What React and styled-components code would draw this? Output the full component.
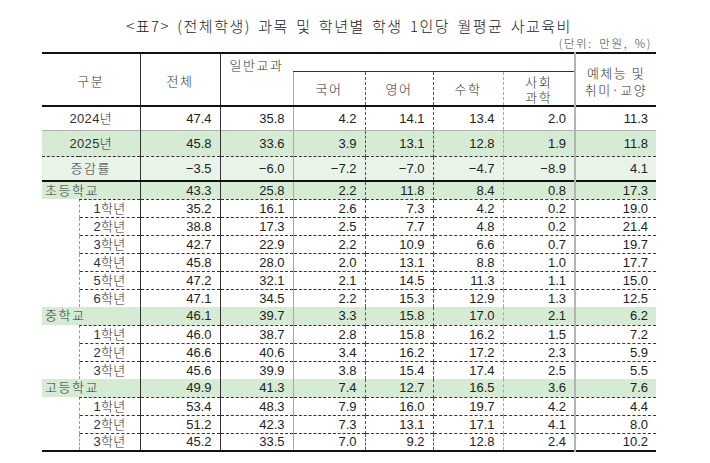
import React from "react";
import styled, { createGlobalStyle, css } from "styled-components";

const Global = createGlobalStyle`
  html, body { margin: 0; padding: 0; background: #ffffff; }
  body { font-family: "Liberation Sans", "Noto Sans CJK KR", sans-serif; color: #222; }
`;

const Page = styled.div`
  width: 710px;
  height: 463px;
  box-sizing: border-box;
  padding: 16px 0 0 42px;
`;

const Frame = styled.div`
  width: 614px;
  display: flex;
  flex-direction: column;
`;

const Title = styled.div`
  text-align: center;
  font-family: "Noto Sans CJK KR", sans-serif;
  font-weight: 300;
  font-size: 15px;
  line-height: 20px;
  letter-spacing: 1.5px;
  word-spacing: 2.5px;
  color: #1a1a1a;
`;

const Unit = styled.div`
  text-align: right;
  padding-right: 4px;
  margin-top: -1px;
  font-family: "Noto Sans CJK KR", sans-serif;
  font-weight: 300;
  font-size: 11.5px;
  line-height: 17px;
  letter-spacing: 1.6px;
  word-spacing: 2.5px;
  color: #444;
`;

const Table = styled.table`
  width: 614px;
  table-layout: fixed;
  border-collapse: collapse;
  border-top: 2px solid #111;
  border-bottom: 2px solid #111;
  font-size: 13px;
  color: #222;
`;

const leftBorder = {
  2: "1px solid #333",
  3: "1px solid #333",
  4: "1px solid #a8a8a8",
  5: "1px dashed #555",
  6: "1px dashed #555",
  7: "1px dashed #aaa",
  8: "2px solid #b4b4b4",
};

const colBorder = css`
  ${(p) => (p.$col && leftBorder[p.$col] ? `border-left: ${leftBorder[p.$col]};` : "")}
`;

const Th = styled.th`
  font-weight: 300;
  font-family: "Noto Sans CJK KR", sans-serif;
  font-size: 13px;
  letter-spacing: 1.5px;
  color: #333;
  padding: 0;
  text-align: center;
  vertical-align: ${(p) => (p.$top ? "top" : "middle")};
  padding-top: ${(p) => (p.$top ? "3px" : "2px")};
  line-height: 16px;
  ${colBorder}
  ${(p) => p.$underline && "border-bottom: 1px solid #333;"}
`;

const HeadLine = styled.span`
  display: block;
  height: ${(p) => p.$h}px;
  line-height: ${(p) => p.$h}px;
`;

const HeadRow = styled.tr`
  height: ${(p) => p.$h}px;
`;

const rowTop = {
  header: "2px solid #111",
  solidGray: "1px solid #b0b0b0",
  dashed: "1px dashed #333",
  none: "none",
};

const Row = styled.tr`
  height: ${(p) => p.$h}px;
  background: ${(p) => p.$bg || "transparent"};
`;

const Td = styled.td`
  padding: 0 8px 0 0;
  text-align: right;
  line-height: 15px;
  white-space: nowrap;
  color: #222;
  ${colBorder}
  border-top: ${(p) => rowTop[p.$top] || "none"};
`;

const LabelCell = styled.td`
  padding: 0;
  text-align: ${(p) => (p.$align === "left" ? "left" : "center")};
  padding-left: ${(p) => (p.$align === "left" ? "3px" : "0")};
  line-height: 15px;
  font-weight: 300;
  letter-spacing: ${(p) => (p.$spaced ? "1.5px" : "0.3px")};
  color: ${(p) => (p.$ink ? p.$ink : "#333")};
  white-space: nowrap;
  border-top: ${(p) => rowTop[p.$top] || "none"};
  ${(p) => p.$leftLine && "border-left: 1px dashed #9a9a9a;"}
`;

const IndentCell = styled.td`
  padding: 0;
  border-top: ${(p) => rowTop[p.$top] || "none"};
`;

const GREEN = "#d5ebd3";
const LIGHT_GREEN = "#e9f4e8";

const fmt = (v) => (v < 0 ? "\u2212" + Math.abs(v).toFixed(1) : v.toFixed(1));

const summary = [
  { label: "2024년", vals: [47.4, 35.8, 4.2, 14.1, 13.4, 2.0, 11.3], h: 24, top: "header" },
  { label: "2025년", vals: [45.8, 33.6, 3.9, 13.1, 12.8, 1.9, 11.8], h: 26, top: "solidGray", bg: GREEN },
  { label: "증감률", vals: [-3.5, -6.0, -7.2, -7.0, -4.7, -8.9, 4.1], h: 25, top: "dashed", bg: LIGHT_GREEN, spaced: true },
];

const groups = [
  {
    label: "초등학교",
    vals: [43.3, 25.8, 2.2, 11.8, 8.4, 0.8, 17.3],
    top: "header",
    grades: [
      [35.2, 16.1, 2.6, 7.3, 4.2, 0.2, 19.0],
      [38.8, 17.3, 2.5, 7.7, 4.8, 0.2, 21.4],
      [42.7, 22.9, 2.2, 10.9, 6.6, 0.7, 19.7],
      [45.8, 28.0, 2.0, 13.1, 8.8, 1.0, 17.7],
      [47.2, 32.1, 2.1, 14.5, 11.3, 1.1, 15.0],
      [47.1, 34.5, 2.2, 15.3, 12.9, 1.3, 12.5],
    ],
  },
  {
    label: "중학교",
    vals: [46.1, 39.7, 3.3, 15.8, 17.0, 2.1, 6.2],
    top: "none",
    grades: [
      [46.0, 38.7, 2.8, 15.8, 16.2, 1.5, 7.2],
      [46.6, 40.6, 3.4, 16.2, 17.2, 2.3, 5.9],
      [45.6, 39.9, 3.8, 15.4, 17.4, 2.5, 5.5],
    ],
  },
  {
    label: "고등학교",
    vals: [49.9, 41.3, 7.4, 12.7, 16.5, 3.6, 7.6],
    top: "none",
    grades: [
      [53.4, 48.3, 7.9, 16.0, 19.7, 4.2, 4.4],
      [51.2, 42.3, 7.3, 13.1, 17.1, 4.1, 8.0],
      [45.2, 33.5, 7.0, 9.2, 12.8, 2.4, 10.2],
    ],
  },
];

const colWidths = [37, 61, 80, 73, 72, 68, 70, 72, 81];

const Values = ({ vals, top }) =>
  vals.map((v, i) => (
    <Td key={i} $col={i + 2} $top={top}>
      {fmt(v)}
    </Td>
  ));

export default function App() {
  return (
    <>
      <Global />
      <Page>
        <Frame>
          <Title>&lt;표7&gt; (전체학생) 과목 및 학년별 학생 1인당 월평균 사교육비</Title>
          <Unit>(단위: 만원, %)</Unit>
          <Table>
            <colgroup>
              {colWidths.map((w, i) => (
                <col key={i} style={{ width: w }} />
              ))}
            </colgroup>
            <thead>
              <HeadRow $h={18}>
                <Th colSpan={2} rowSpan={2}>구분</Th>
                <Th rowSpan={2} $col={2}>전체</Th>
                <Th rowSpan={2} $col={3} $top>일반교과</Th>
                <Th colSpan={4} $underline />
                <Th rowSpan={2} $col={8}>
                  <HeadLine $h={17}>예체능 및</HeadLine>
                  <HeadLine $h={17}>취미·교양</HeadLine>
                </Th>
              </HeadRow>
              <HeadRow $h={35}>
                <Th $col={4}>국어</Th>
                <Th $col={5}>영어</Th>
                <Th $col={6}>수학</Th>
                <Th $col={7}>
                  <HeadLine $h={15}>사회</HeadLine>
                  <HeadLine $h={15}>과학</HeadLine>
                </Th>
              </HeadRow>
            </thead>
            <tbody>
              {summary.map((r) => (
                <Row key={r.label} $h={r.h} $bg={r.bg}>
                  <LabelCell colSpan={2} $top={r.top} $spaced={r.spaced}>
                    {r.label}
                  </LabelCell>
                  <Values vals={r.vals} top={r.top} />
                </Row>
              ))}
              {groups.map((g) => (
                <React.Fragment key={g.label}>
                  <Row $h={18} $bg={GREEN}>
                    <LabelCell colSpan={2} $align="left" $spaced $top={g.top}>
                      {g.label}
                    </LabelCell>
                    <Values vals={g.vals} top={g.top} />
                  </Row>
                  {g.grades.map((vals, i) => (
                    <Row key={i} $h={18}>
                      <IndentCell />
                      <LabelCell $top="dashed" $leftLine $ink="#2e3040">
                        {i + 1}학년
                      </LabelCell>
                      <Values vals={vals} top="dashed" />
                    </Row>
                  ))}
                </React.Fragment>
              ))}
            </tbody>
          </Table>
        </Frame>
      </Page>
    </>
  );
}
